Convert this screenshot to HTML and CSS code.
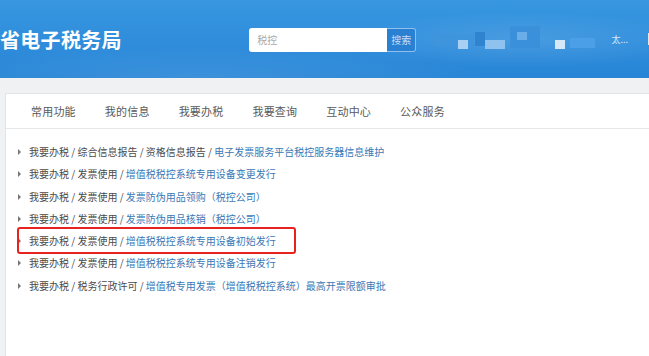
FILE: index.html
```
<!DOCTYPE html>
<html lang="zh-CN">
	<head>
		<meta charset="UTF-8">
		<meta name="viewport" content="width=device-width,initial-scale=1">
		<title>电子税务局</title>
		<link rel="stylesheet" href="styles.css">
	</head>
	<body>
		<header class="header">
			<h1 class="logo">省电子税务局</h1>
			<form class="search">
				<span class="search__input">税控</span>
				<span class="search__btn">搜索</span>
			</form>
			<div class="mosaic">
				<span class="mosaic__cell m1"></span>
				<span class="mosaic__cell m2"></span>
				<span class="mosaic__cell m3"></span>
				<span class="mosaic__cell m4"></span>
				<span class="mosaic__cell m5"></span>
				<span class="mosaic__cell m6"></span>
				<span class="mosaic__cell m7"></span>
				<span class="mosaic__cell m8"></span>
			</div>
			<span class="user">太...</span>
			<span class="user-sep"></span>
		</header>
		<main class="main">
			<section class="card">
				<nav class="nav">
					<a class="nav__item">常用功能</a>
					<a class="nav__item">我的信息</a>
					<a class="nav__item">我要办税</a>
					<a class="nav__item">我要查询</a>
					<a class="nav__item">互动中心</a>
					<a class="nav__item">公众服务</a>
				</nav>
				<ul class="list">
					<li class="list__item">我要办税 / 综合信息报告 / 资格信息报告 / <a class="list__link">电子发票服务平台税控服务器信息维护</a></li>
					<li class="list__item">我要办税 / 发票使用 / <a class="list__link">增值税税控系统专用设备变更发行</a></li>
					<li class="list__item">我要办税 / 发票使用 / <a class="list__link">发票防伪用品领购（税控公司）</a></li>
					<li class="list__item">我要办税 / 发票使用 / <a class="list__link">发票防伪用品核销（税控公司）</a></li>
					<li class="list__item is-marked">我要办税 / 发票使用 / <a class="list__link">增值税税控系统专用设备初始发行</a></li>
					<li class="list__item">我要办税 / 发票使用 / <a class="list__link">增值税税控系统专用设备注销发行</a></li>
					<li class="list__item">我要办税 / 税务行政许可 / <a class="list__link">增值税专用发票（增值税税控系统）最高开票限额审批</a></li>
				</ul>
			</section>
		</main>
	</body>
</html>
```
FILE: styles.css
```
body
{
	margin: 0;
	font-family: "Noto Sans CJK SC", "Noto Sans", sans-serif;
	background-color: #f0f1f2;
	overflow: hidden;
}

.header
{
	height: 78px;
	display: flex;
	align-items: center;
	background:
		radial-gradient(ellipse 260px 40px at 520px 40px, rgba(255, 255, 255, 0.12), transparent 70%),
		radial-gradient(ellipse 420px 50px at 200px 80px, rgba(255, 255, 255, 0.10), transparent 70%),
		linear-gradient(180deg, #3897e0 0%, #2e8cdb 60%, #2785d6 100%);
}

.logo
{
	margin: 0;
	width: 252px;
	font-size: 20px;
	font-weight: bold;
	color: #fff;
	letter-spacing: 0.3px;
}

.search
{
	display: flex;
	height: 24px;
	margin-top: 1px;
}

.search__input
{
	width: 130px;
	padding-left: 8px;
	background-color: #fff;
	border-radius: 3px 0 0 3px;
	font-size: 10px;
	line-height: 24px;
	color: #aaa;
}

.search__btn
{
	width: 28px;
	background-color: #2a80d2;
	border: 1px solid #8fc0ec;
	border-left: 0;
	border-radius: 0 3px 3px 0;
	font-size: 10px;
	line-height: 22px;
	text-align: center;
	color: #c9def3;
}

.mosaic
{
	position: relative;
	width: 175px;
	height: 30px;
	margin-left: 14px;
}

.mosaic__cell
{
	position: absolute;
	background-color: #4a9fe6;
}

.m1 { left: 4px; top: 10px; width: 40px; height: 12px; background-color: #3f95dc; }
.m2 { left: 28px; top: 16px; width: 10px; height: 9px; background-color: #a9d0f3; }
.m3 { left: 45px; top: 8px; width: 10px; height: 14px; background-color: #2f83cf; }
.m4 { left: 55px; top: 16px; width: 20px; height: 9px; background-color: #8fc2ef; }
.m5 { left: 80px; top: 2px; width: 30px; height: 22px; background-color: #3a90da; }
.m6 { left: 87px; top: 8px; width: 10px; height: 8px; background-color: #6aaee9; }
.m7 { left: 125px; top: 16px; width: 10px; height: 9px; background-color: #d6e8f8; }
.m8 { left: 140px; top: 14px; width: 25px; height: 10px; background-color: #4a9fe6; }

.user
{
	margin-left: 8px;
	font-size: 9px;
	color: #d8e9f8;
}

.user-sep
{
	width: 1px;
	height: 12px;
	margin-left: 20px;
	background-color: #d8e9f8;
}

.main
{
	padding: 15px 0 0 5px;
}

.card
{
	width: 660px;
	height: 300px;
	background-color: #fff;
	border: 1px solid #e2e4e6;
}

.nav
{
	display: flex;
	gap: 29px;
	height: 34px;
	padding-left: 25px;
	border-bottom: 1px solid #e6e7e8;
	align-items: center;
}

.nav__item
{
	font-size: 11px;
	color: #5a5a5a;
	letter-spacing: 0.2px;
}

.list
{
	margin: 0;
	padding: 12px 0 0 12px;
	list-style: none;
}

.list__item
{
	position: relative;
	width: 268px;
	height: 22px;
	margin-bottom: 0.3px;
	padding-left: 11px;
	font-size: 10px;
	line-height: 22px;
	color: #4a4a4a;
	white-space: nowrap;
}

.list__item::before
{
	content: "";
	position: absolute;
	left: 0;
	top: 8px;
	border-left: 3px solid #777;
	border-top: 3px solid transparent;
	border-bottom: 3px solid transparent;
}

.list__item.is-marked::after
{
	content: "";
	position: absolute;
	left: -1px;
	top: -3px;
	width: 275px;
	height: 23px;
	border: 2px solid #e8231f;
	border-radius: 3px;
}

.list__link
{
	color: #3a78b5;
}
```
